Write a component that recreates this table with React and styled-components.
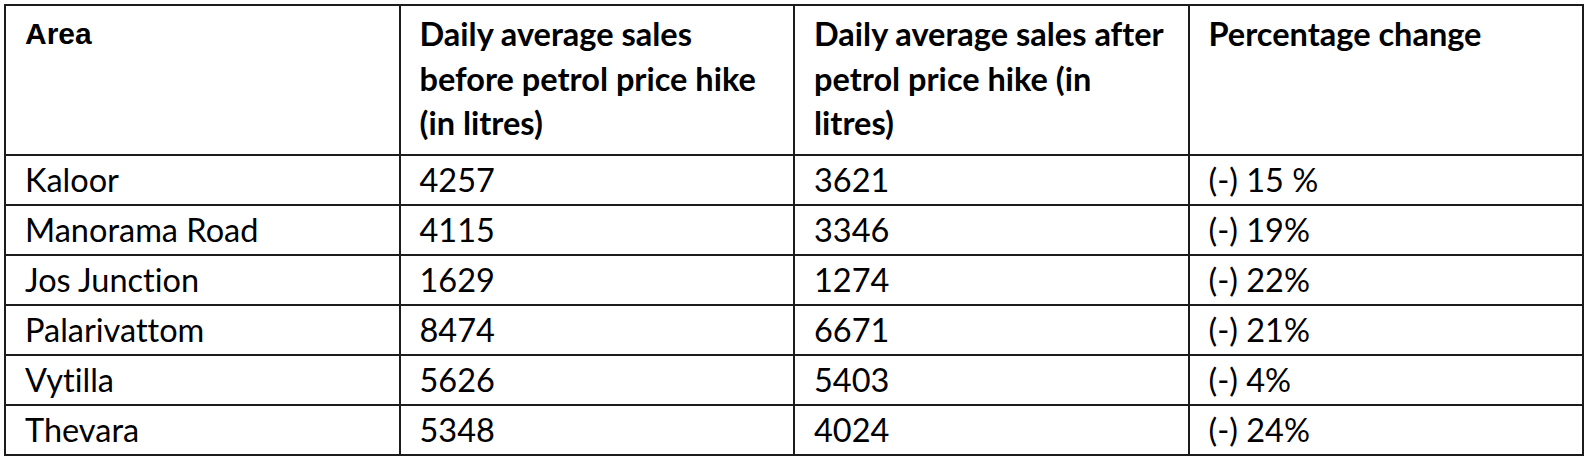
import React from "react";
import styled, { createGlobalStyle } from "styled-components";

const Global = createGlobalStyle`
  html, body { margin: 0; padding: 0; background: #fff; }
  body {
    font-family: Lato, "Open Sans", sans-serif;
    color: #000;
    font-variant-ligatures: none;
    font-feature-settings: "liga" 0, "clig" 0;
  }
`;

const Page = styled.div`
  padding: 4px 0 0 4px;
`;

const Table = styled.table`
  width: 1580px;
  border-collapse: collapse;
  table-layout: fixed;
  border: 2px solid #1c1c1c;
`;

const HeadCell = styled.th`
  height: 150px;
  box-sizing: border-box;
  border: 2px solid #1c1c1c;
  padding: 6px 10px 0 19px;
  vertical-align: top;
  text-align: left;
  font-family: ${(p) => (p.$alt ? '"Liberation Sans", Arial, sans-serif' : 'Lato, "Open Sans", sans-serif')};
  font-size: ${(p) => (p.$alt ? "30px" : "32.5px")};
  font-weight: 700;
  line-height: 44.5px;
  white-space: nowrap;
  font-variant-ligatures: none;
`;

const Cell = styled.td`
  height: 50px;
  box-sizing: border-box;
  border: 2px solid #1c1c1c;
  padding: 0 19px;
  vertical-align: middle;
  font-size: 32.5px;
  line-height: 32px;
  white-space: nowrap;
  font-variant-ligatures: none;
  font-feature-settings: "liga" 0, "clig" 0;
`;

const headers = [
  { key: "area", lines: ["Area"], alt: true },
  { key: "before", lines: ["Daily average sales", "before petrol price hike", "(in litres)"] },
  { key: "after", lines: ["Daily average sales after", "petrol price hike (in", "litres)"] },
  { key: "pct", lines: ["Percentage change"] },
];

const rows = [
  ["Kaloor", "4257", "3621", "(-) 15 %"],
  ["Manorama Road", "4115", "3346", "(-) 19%"],
  ["Jos Junction", "1629", "1274", "(-) 22%"],
  ["Palarivattom", "8474", "6671", "(-) 21%"],
  ["Vytilla", "5626", "5403", "(-) 4%"],
  ["Thevara", "5348", "4024", "(-) 24%"],
];

export default function App() {
  return (
    <Page>
      <Global />
      <Table>
        <thead>
          <tr>
            {headers.map((h) => (
              <HeadCell key={h.key} $alt={h.alt}>
                {h.lines.map((l, i) => (
                  <React.Fragment key={i}>
                    {i > 0 && <br />}
                    {l}
                  </React.Fragment>
                ))}
              </HeadCell>
            ))}
          </tr>
        </thead>
        <tbody>
          {rows.map((r) => (
            <tr key={r[0]}>
              {r.map((c, i) => (
                <Cell key={i}>{c}</Cell>
              ))}
            </tr>
          ))}
        </tbody>
      </Table>
    </Page>
  );
}
